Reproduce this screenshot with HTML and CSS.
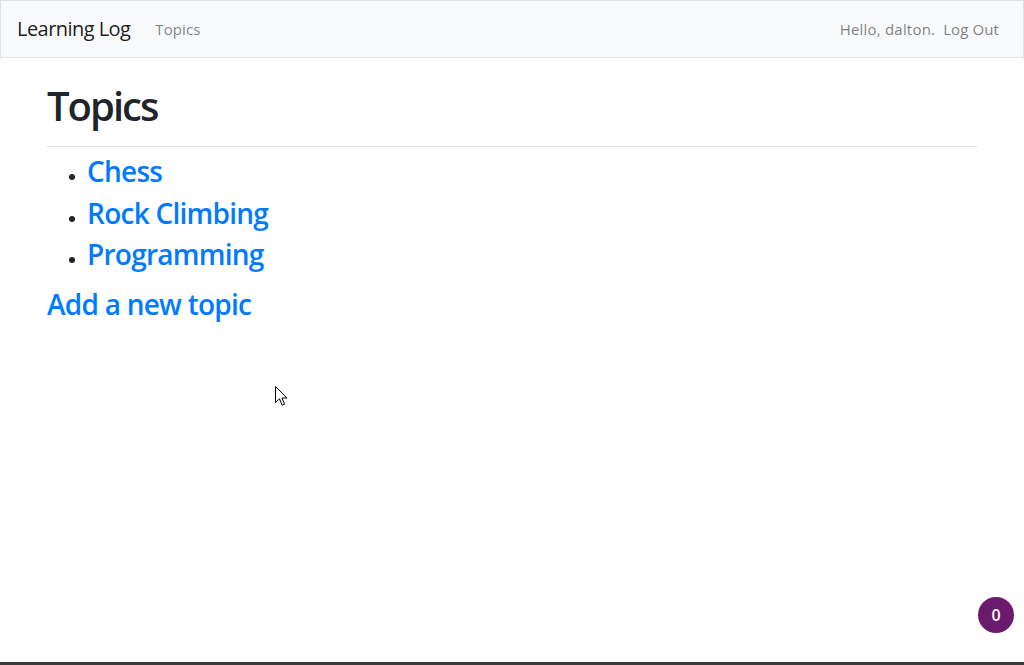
FILE: index.html
```html
<!DOCTYPE html>
<html lang="en">
<head>
<meta charset="utf-8">
<title>Learning Log</title>
<link rel="stylesheet" href="styles.css">
</head>
<body>
<nav class="navbar">
  <div class="nav-left">
    <a class="brand" href="#">Learning Log</a>
    <a class="nav-link" href="#">Topics</a>
  </div>
  <div class="nav-right">
    <span class="nav-text">Hello, dalton.</span>
    <a class="nav-link" href="#">Log Out</a>
  </div>
</nav>
<main class="container">
  <div class="page-header">
    <h1>Topics</h1>
  </div>
  <div class="content">
    <ul class="topic-list">
      <li><h3><a href="#">Chess</a></h3></li>
      <li><h3><a href="#">Rock Climbing</a></h3></li>
      <li><h3><a href="#">Programming</a></h3></li>
    </ul>
    <h3><a href="#">Add a new topic</a></h3>
  </div>
</main>
<svg class="cursor" width="13" height="21" viewBox="0 0 13 21">
  <path d="M0.5 0.5 L0.5 16.5 L4.5 12.8 L7.2 19.2 L9.6 18.2 L7 12 L12 12 Z" fill="#fff" stroke="#000" stroke-width="1" stroke-linejoin="miter"/>
</svg>
<div class="badge">0</div>
<div class="bottom-bar"></div>
</body>
</html>
```
FILE: styles.css
```css
* { box-sizing: border-box; }
html, body { margin: 0; padding: 0; }
body {
  font-family: "Open Sans", "Noto Sans", sans-serif;
  font-size: 16px;
  line-height: 1.5;
  color: #212529;
  background: #fff;
  height: 665px;
  overflow: hidden;
  position: relative;
}
a { color: #007bff; text-decoration: none; }
.navbar {
  display: flex;
  justify-content: space-between;
  align-items: center;
  background: #f8f9fa;
  border: 1px solid #dee2e6;
  padding: 8px 16px;
  height: 58px;
  margin-bottom: 24px;
}
.nav-left, .nav-right { display: flex; align-items: center; }
.brand {
  font-size: 20px;
  line-height: 30px;
  padding: 5px 0;
  margin-right: 17px;
  color: rgba(0,0,0,.9);
  letter-spacing: -0.55px;
}
.nav-link {
  color: rgba(0,0,0,.5);
  padding: 8px;
  font-size: 15px;
  letter-spacing: 0.1px;
}
.nav-text {
  color: rgba(0,0,0,.5);
  padding: 8px 0;
  font-size: 15px;
  letter-spacing: 0.2px;
}
.container {
  width: 960px;
  margin: 0 auto;
  padding: 0 15px;
}
.page-header {
  padding-bottom: 8px;
  margin-bottom: 8px;
  border-bottom: 1px solid #dee2e6;
}
h1 {
  margin: 0 0 8px;
  font-size: 40px;
  line-height: 48px;
  font-weight: 600;
  letter-spacing: -2px;
}
h3 {
  margin: 0 0 8px;
  font-size: 28px;
  line-height: 33.6px;
  font-weight: 600;
  letter-spacing: -0.75px;
}
.topic-list {
  margin: 0 0 16px;
  padding-left: 40px;
}
.cursor {
  position: absolute;
  left: 275px;
  top: 386px;
}
.badge {
  position: absolute;
  left: 978px;
  top: 597px;
  width: 36px;
  height: 36px;
  border-radius: 50%;
  background: #6b1a6e;
  color: #fff;
  font-size: 16px;
  font-weight: 600;
  display: flex;
  align-items: center;
  justify-content: center;
}
.bottom-bar {
  position: absolute;
  left: 0;
  right: 0;
  bottom: 0;
  height: 3px;
  background: #3b3b3b;
}
```
